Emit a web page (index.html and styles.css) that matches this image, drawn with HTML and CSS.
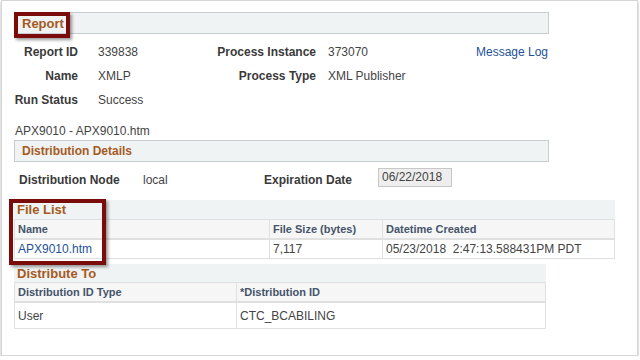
FILE: index.html
```html
<!DOCTYPE html>
<html lang="en">
<head>
    <meta charset="UTF-8">
    <title>Report Detail</title>
    <link rel="stylesheet" href="styles.css">
</head>
<body>

<div class="frame">
    <div class="report">
        <div class="group-bar">Report</div>

        <div class="fields">
            <span class="label">Report ID</span>
            <span class="value">339838</span>
            <span class="label">Process Instance</span>
            <span class="value value-right">373070</span>
            <a class="link" href="#">Message Log</a>

            <span class="label">Name</span>
            <span class="value">XMLP</span>
            <span class="label">Process Type</span>
            <span class="value value-right">XML Publisher</span>
            <span></span>

            <span class="label">Run Status</span>
            <span class="value">Success</span>
        </div>

        <div class="file-title">APX9010 - APX9010.htm</div>

        <div class="group-bar group-bar-small">Distribution Details</div>
        <div class="dist-row">
            <span class="label dist-label">Distribution Node</span>
            <span class="value dist-node">local</span>
            <span class="label exp-label">Expiration Date</span>
            <span class="date-box">06/22/2018</span>
        </div>
    </div>

    <div class="grid-section file-list">
        <div class="grid-title">File List</div>
        <table class="grid">
            <tr>
                <th class="col-name">Name</th>
                <th class="col-size">File Size (bytes)</th>
                <th>Datetime Created</th>
            </tr>
            <tr>
                <td><a class="link" href="#">APX9010.htm</a></td>
                <td>7,117</td>
                <td>05/23/2018&nbsp; 2:47:13.588431PM PDT</td>
            </tr>
        </table>
    </div>

    <div class="grid-section distribute">
        <div class="grid-title">Distribute To</div>
        <table class="grid">
            <tr>
                <th class="col-type">Distribution ID Type</th>
                <th>*Distribution ID</th>
            </tr>
            <tr class="tall">
                <td>User</td>
                <td>CTC_BCABILING</td>
            </tr>
        </table>
    </div>

    <div class="callout callout-report"></div>
    <div class="callout callout-files"></div>
</div>

</body>
</html>
```

FILE: styles.css
```css
body {
    margin: 0;
    background-color: #ffffff;
    font-family: "Liberation Sans", Arial, sans-serif;
    font-size: 12px;
    color: #333333;
}
.frame {
    position: relative;
    margin-left: 1px;
    width: 635px;
    height: 354px;
    border: 1px solid #d6d6d6;
    box-shadow: 0 2px 2px rgba(0, 0, 0, 0.35);
}
.report {
    margin: 11px 0 0 12px;
    width: 535px;
}
.group-bar {
    height: 20px;
    line-height: 21px;
    padding-left: 7px;
    border: 1px solid #c9cdd1;
    background-color: #f0f3f4;
    color: #a65a1f;
    font-size: 13px;
    font-weight: bold;
}
.group-bar-small {
    font-size: 12px;
}
.fields {
    display: grid;
    grid-template-columns: 64px 138px 100px 146px 1fr;
    grid-auto-rows: 24px;
    align-items: center;
    margin-top: 6px;
}
.label {
    font-weight: bold;
    text-align: right;
    color: #3a3a3a;
}
.value {
    padding-left: 20px;
    color: #444444;
}
.value-right {
    padding-left: 12px;
}
.link {
    color: #1d5298;
    text-decoration: none;
}
.fields .link {
    padding-left: 14px;
}
.file-title {
    margin-top: 11px;
    padding-left: 1px;
    line-height: 16px;
    color: #444444;
}
.report .group-bar-small {
    margin-top: 1px;
}
.dist-row {
    display: flex;
    align-items: flex-start;
    margin-top: 6px;
    height: 19px;
}
.dist-row .label,
.dist-row .value {
    margin-top: 5px;
    line-height: 14px;
}
.dist-label {
    width: 129px;
    padding-left: 5px;
    text-align: left;
    box-sizing: border-box;
}
.value.dist-node {
    width: 109px;
    padding-left: 0;
}
.exp-label {
    width: 100px;
}
.date-box {
    margin-left: 26px;
    width: 74px;
    height: 19px;
    box-sizing: border-box;
    padding-left: 3px;
    line-height: 16px;
    border: 1px solid #c7c7c7;
    background-color: #eeeeee;
    color: #444444;
}
.grid-section {
    margin-left: 12px;
}
.file-list {
    margin-top: 13px;
    width: 601px;
}
.distribute {
    margin-top: 5px;
    width: 532px;
}
.grid-title {
    height: 19px;
    line-height: 20px;
    padding-left: 3px;
    background-color: #f0f3f4;
    color: #a65a1f;
    font-size: 13px;
    font-weight: bold;
}
.distribute .grid-title {
    height: 18px;
    line-height: 19px;
}
.grid {
    width: 100%;
    border-collapse: collapse;
}
.grid th,
.grid td {
    padding: 1px 3px 0;
    line-height: 17px;
    text-align: left;
    border: 1px solid #e0e0e0;
}
.grid th {
    background-color: #f6f6f6;
    border-bottom: 2px solid #e0e0e0;
    color: #45546a;
    font-size: 11px;
}
.grid td {
    color: #444444;
}
.grid .tall td {
    line-height: 24px;
}
.col-name {
    width: 248px;
}
.col-size {
    width: 106px;
}
.col-type {
    width: 215px;
}
.callout {
    position: absolute;
    border: 4px solid #7a0c0c;
    box-shadow: 2px 2px 3px rgba(0, 0, 0, 0.4);
    box-sizing: border-box;
}
.callout-report {
    left: 12px;
    top: 11px;
    width: 56px;
    height: 26px;
}
.callout-files {
    left: 7px;
    top: 198px;
    width: 97px;
    height: 66px;
}
```
